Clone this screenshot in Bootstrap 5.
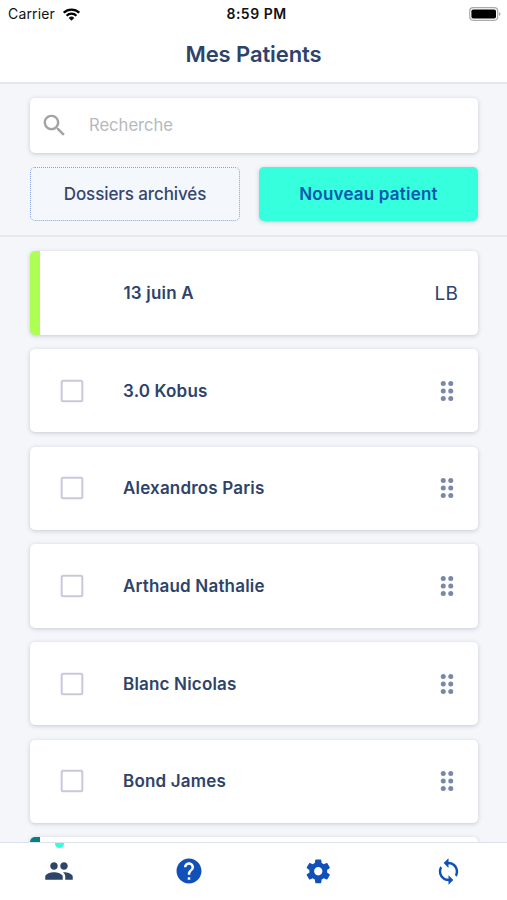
<!DOCTYPE html>
<html lang="fr">
<head>
<meta charset="utf-8">
<meta name="viewport" content="width=device-width, initial-scale=1">
<title>Mes Patients</title>
<link href="https://cdn.jsdelivr.net/npm/bootstrap@5.3.0/dist/css/bootstrap.min.css" rel="stylesheet">
<style>
body{font-family:Inter,"Liberation Sans",sans-serif;background:#f4f6fa;color:#2e4369;line-height:1}
svg{display:block;fill:currentColor;flex:none}
.screen{height:900px}
.statusbar{height:28px;font-size:14px;color:#111;padding:0 6px 0 8px}
.statusbar .side{flex:1 1 0}
.carrier{letter-spacing:.15px}
.clock{font-weight:600;font-size:14px;letter-spacing:.5px;margin-left:2px;margin-right:-2px}
.titlebar{height:56px;border-bottom:2px solid #e4e7ee}
.titlebar h1{font-size:22px;font-weight:600;letter-spacing:-.1px;padding-bottom:1px}
.tools{padding:14px 29px 15px 30px;border-bottom:2px solid #e5e8ee;height:153.3px}
.raised{background:#fff;border-radius:5px;box-shadow:0 1px 4px rgba(60,70,90,.25)}
.searchbox{height:54.5px;padding:0 12px 0 10px}
.searchbox svg{color:#a2a3a5}
.searchbox input,.searchbox input:focus{border:0;background:none;box-shadow:none;font-size:16.6px;padding:1px 0 0;margin-left:20px}
.searchbox input::placeholder{color:#b7b9bc;opacity:1}
.actions{margin-top:14px;gap:19px}
.actions .btn{height:54px;font-size:17px;border-radius:5px;padding:2px 0 0}
.archived,.archived:hover{width:210px;border:1px dotted #87a1d4;background:#f4f8fd;color:#35466f;font-weight:500;letter-spacing:-.1px}
.newpat,.newpat:hover{border:0;background:#35ffdc;color:#0d58ae;font-weight:600;letter-spacing:.2px;box-shadow:0 1px 4px rgba(60,70,90,.25)}
.patients{padding:14px 29px 0 30px;gap:14.4px;min-height:0}
.patient{height:83.3px;flex:none;font-size:17px;font-weight:600;letter-spacing:.18px;padding:0 20px 0 26.5px;overflow:hidden}
.patient span{padding-top:1px}
.patient.flagged{border-left:10px solid #adff54;padding-left:83.5px}
.patient.teal{border-left:10px solid #067f80}
.patient .box{color:#c8c7db;margin-right:36.5px}
.patient .grip{color:#7a88a8;margin-right:-3.500px}
.initials{font-size:19px;font-weight:400}
.tabbar{height:58.5px;border-top:1.5px solid #dce1ee;color:#1150b9}
.tabbar .tab{width:129.6px;color:inherit}
.tabbar .tab:first-child{color:#2c4568;width:124px;padding-right:5.700px}
.tabbar .tab:last-child{width:123.8px;padding-left:6px}
.tab .dot{width:9px;height:5px;border-radius:0 0 5px 5px;background:#35ffd8;top:0;left:55px}
</style>
<script src="https://cdn.jsdelivr.net/npm/bootstrap@5.3.0/dist/js/bootstrap.bundle.min.js"></script>
</head>
<body>
<svg class="d-none">
<symbol id="blank" viewBox="0 0 24 24"><rect x="3.750" y="3.750" width="16.500" height="16.500" rx="1.200" fill="none" stroke="currentColor" stroke-width="1.600"/></symbol>
<symbol id="grip" viewBox="0 0 24 24"><circle cx="9" cy="6" r="2"/><circle cx="15" cy="6" r="2"/><circle cx="9" cy="12" r="2"/><circle cx="15" cy="12" r="2"/><circle cx="9" cy="18" r="2"/><circle cx="15" cy="18" r="2"/></symbol>
</svg>
<div class="screen d-flex flex-column overflow-hidden">
<header class="bg-white flex-shrink-0">
<div class="statusbar d-flex align-items-center">
<div class="side d-flex align-items-center"><span class="carrier">Carrier</span>
<svg class="ms-2" width="17" height="13" viewBox="0 0 17 13"><g fill="none" stroke="#000" stroke-width="2.300"><path d="M.8 4.700a11 11 0 0 1 15.400 0"/><path d="M3.600 7.700a7 7 0 0 1 9.800 0"/></g><path d="M8.500 12.700 5.700 9.900a4 4 0 0 1 5.600 0z"/></svg></div>
<span class="clock">8:59 PM</span>
<div class="side d-flex justify-content-end"><svg width="32" height="14" viewBox="0 0 32 14"><rect x=".7" y=".7" width="28" height="12.600" rx="3.500" fill="none" stroke="#aaa" stroke-width="1.200"/><rect x="2.400" y="2.400" width="24.600" height="9.200" rx="1.800" fill="#000"/><path d="M30 5v4q1.500-.7 1.500-2T30 5z" fill="#aaa"/></svg></div>
</div>
<div class="titlebar d-flex align-items-center justify-content-center"><h1 class="m-0">Mes Patients</h1></div>
</header>
<section class="tools flex-shrink-0">
<div class="searchbox raised d-flex align-items-center">
<svg width="29" height="29" viewBox="0 0 24 24"><path d="M15.500 14h-.79l-.28-.27C15.410 12.590 16 11.110 16 9.500 16 5.910 13.090 3 9.500 3S3 5.910 3 9.500 5.910 16 9.500 16c1.610 0 3.090-.59 4.230-1.570l.27.28v.79l5 4.990L20.490 19l-4.990-5zm-6 0C7.010 14 5 11.990 5 9.500S7.010 5 9.500 5 14 7.010 14 9.500 11.990 14 9.500 14z"/></svg>
<input class="form-control" type="text" placeholder="Recherche">
</div>
<div class="actions d-flex"><button class="btn archived">Dossiers archivés</button><button class="btn newpat flex-fill">Nouveau patient</button></div>
</section>
<main class="patients d-flex flex-column flex-fill overflow-hidden">
<div class="patient raised flagged d-flex align-items-center"><span class="flex-fill">13 juin A</span><span class="initials">LB</span></div>
<div class="patient raised d-flex align-items-center"><svg class="box" width="30" height="30"><use href="#blank"/></svg><span class="flex-fill">3.0 Kobus</span><svg class="grip" width="30" height="30"><use href="#grip"/></svg></div>
<div class="patient raised d-flex align-items-center"><svg class="box" width="30" height="30"><use href="#blank"/></svg><span class="flex-fill">Alexandros Paris</span><svg class="grip" width="30" height="30"><use href="#grip"/></svg></div>
<div class="patient raised d-flex align-items-center"><svg class="box" width="30" height="30"><use href="#blank"/></svg><span class="flex-fill">Arthaud Nathalie</span><svg class="grip" width="30" height="30"><use href="#grip"/></svg></div>
<div class="patient raised d-flex align-items-center"><svg class="box" width="30" height="30"><use href="#blank"/></svg><span class="flex-fill">Blanc Nicolas</span><svg class="grip" width="30" height="30"><use href="#grip"/></svg></div>
<div class="patient raised d-flex align-items-center"><svg class="box" width="30" height="30"><use href="#blank"/></svg><span class="flex-fill">Bond James</span><svg class="grip" width="30" height="30"><use href="#grip"/></svg></div>
<div class="patient raised teal"></div>
</main>
<nav class="tabbar bg-white d-flex flex-shrink-0">
<a class="tab position-relative d-flex align-items-center justify-content-center" href="#" aria-label="Patients"><span class="dot position-absolute"></span><svg width="30" height="30" viewBox="0 0 24 24"><path d="M16 11c1.660 0 2.990-1.340 2.990-3S17.660 5 16 5c-1.660 0-3 1.340-3 3s1.340 3 3 3zm-8 0c1.660 0 2.990-1.340 2.990-3S9.660 5 8 5C6.340 5 5 6.340 5 8s1.340 3 3 3zm0 2c-2.330 0-7 1.170-7 3.500V19h14v-2.500c0-2.330-4.670-3.500-7-3.500zm8 0c-.29 0-.62.02-.97.05 1.160.84 1.970 1.970 1.970 3.450V19h6v-2.500c0-2.330-4.670-3.500-7-3.500z"/></svg></a>
<a class="tab d-flex align-items-center justify-content-center" href="#" aria-label="Aide"><svg width="30" height="30" viewBox="0 0 24 24"><path d="M12 2C6.480 2 2 6.480 2 12s4.480 10 10 10 10-4.480 10-10S17.520 2 12 2zm1 17h-2v-2h2v2zm2.070-7.750l-.9.920C13.450 12.900 13 13.500 13 15h-2v-.5c0-1.100.45-2.100 1.170-2.830l1.240-1.260c.37-.36.59-.86.59-1.410 0-1.100-.9-2-2-2s-2 .9-2 2H8c0-2.210 1.790-4 4-4s4 1.790 4 4c0 .88-.36 1.680-.93 2.250z"/></svg></a>
<a class="tab d-flex align-items-center justify-content-center" href="#" aria-label="Réglages"><svg width="28.500" height="28.500" viewBox="0 0 24 24"><path d="M19.430 12.980c.04-.32.07-.64.07-.98s-.03-.66-.07-.98l2.110-1.650c.19-.15.24-.42.12-.64l-2-3.460c-.12-.22-.39-.3-.61-.22l-2.490 1c-.52-.4-1.080-.73-1.690-.98l-.38-2.650C14.460 2.180 14.250 2 14 2h-4c-.25 0-.46.18-.49.42l-.38 2.650c-.61.25-1.170.59-1.690.98l-2.490-1c-.23-.09-.49 0-.61.22l-2 3.460c-.13.22-.07.49.12.64l2.110 1.650c-.04.32-.07.65-.07.98s.03.66.07.98l-2.110 1.650c-.19.15-.24.42-.12.64l2 3.460c.12.22.39.3.61.22l2.490-1c.52.4 1.080.73 1.690.98l.38 2.650c.03.24.24.42.49.42h4c.25 0 .46-.18.49-.42l.38-2.650c.61-.25 1.170-.59 1.690-.98l2.490 1c.23.09.49 0 .61-.22l2-3.460c.12-.22.07-.49-.12-.64l-2.110-1.650zM12 15.500c-1.930 0-3.500-1.570-3.500-3.500s1.570-3.500 3.500-3.500 3.500 1.570 3.500 3.500-1.570 3.500-3.500 3.500z"/></svg></a>
<a class="tab d-flex align-items-center justify-content-center" href="#" aria-label="Synchroniser"><svg width="29" height="29" viewBox="0 0 24 24"><path d="M12 4V1L8 5l4 4V6c3.310 0 6 2.690 6 6 0 1.010-.25 1.970-.7 2.800l1.460 1.460C19.540 15.030 20 13.570 20 12c0-4.420-3.580-8-8-8zm0 14c-3.310 0-6-2.690-6-6 0-1.010.25-1.970.7-2.800L5.240 7.740C4.460 8.970 4 10.430 4 12c0 4.420 3.580 8 8 8v3l4-4-4-4v3z"/></svg></a>
</nav>
</div>
</body>
</html>
